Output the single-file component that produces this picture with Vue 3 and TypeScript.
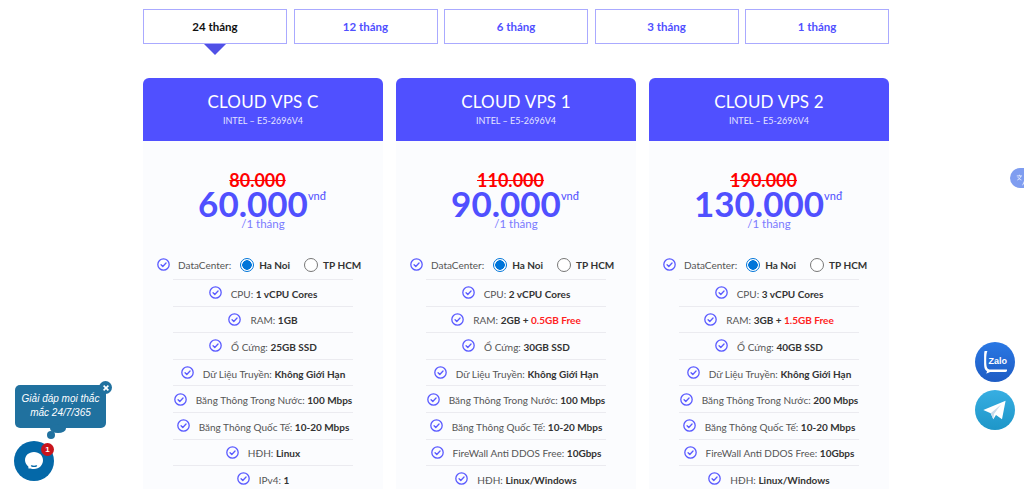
<template>
  <div class="page">
    <div class="wrap">
      <div class="tabs">
        <div v-for="(t, i) in tabs" :key="t" class="tab" :class="{ active: i === 0 }">{{ t }}</div>
      </div>
      <div class="cards">
        <div v-for="c in cards" :key="c.name" class="card">
          <div class="head">
            <div class="name">{{ c.name }}</div>
            <div class="cpu">INTEL – E5-2696V4</div>
          </div>
          <div class="body">
            <div class="old">{{ c.old }}</div>
            <div class="price">{{ c.price }}<sup>vnđ</sup></div>
            <div class="per">/1 tháng</div>
            <div class="dc">
              <svg class="chk" viewBox="0 0 24 24"><circle cx="12" cy="12" r="10.500" /><path d="M7.500 12.500l3.200 3.200 6-6.400" /></svg>
              <span class="lbl">DataCenter:</span>
              <span class="radio on"></span><b>Ha Noi</b>
              <span class="radio"></span><b>TP HCM</b>
            </div>
            <div class="rows">
              <div v-for="r in c.rows" :key="r.k" class="row">
                <svg class="chk" viewBox="0 0 24 24"><circle cx="12" cy="12" r="10.500" /><path d="M7.500 12.500l3.200 3.200 6-6.400" /></svg>
                <span class="txt">{{ r.k }}: <b>{{ r.v }}</b><b v-if="r.free"> + <em>{{ r.free }}</em></b></span>
              </div>
            </div>
          </div>
        </div>
      </div>
    </div>

    <div class="translate">
      <svg viewBox="0 0 24 24" width="14" height="14"><path d="M3 5h9M7.500 3v2M4 12c3-1 5-3 6-7M5 7c1 2 3 4 6 5M13 21l4-9 4 9M14.500 18h5" /></svg>
    </div>

    <div class="social zalo">
      <svg viewBox="0 0 40 40" width="40" height="40">
        <path class="zb" d="M9.600 9h2.800c-.8 2-1.200 4.500-1.200 9 0 3.500.2 6.200.8 7.500.6 1.400 1.600 2 3.600 2.100L32 27.500v1.300c0 .6-.6 1.200-1.500 1.200H17.500c-1.300 0-2.200-.1-3 .2-.9.4-2 1-3.500 1.300.6-.8 1-1.500 1-2.300-1.800-1-2.900-3-2.900-7V13c0-1.500.2-3 .5-4z" />
        <text x="22.800" y="21.500" text-anchor="middle">Zalo</text>
      </svg>
    </div>
    <div class="social tele">
      <svg viewBox="0 0 40 40" width="40" height="40">
        <path fill="#fff" d="M8.300 20 30.600 10.700 27 29.300 21 25l-2.700 4.300-2.600-6z" />
        <path fill="#c8daea" d="M15.700 23.300 26 14.500l-7 9.500-.7 5.300z" />
      </svg>
    </div>

    <div class="bubble">
      Giải đáp mọi thắc mắc 24/7/365
      <span class="close">
        <svg viewBox="0 0 10 10" width="8" height="8"><path d="M2 2l6 6M8 2l-6 6" /></svg>
      </span>
    </div>
    <span class="dot big"></span>
    <span class="dot small"></span>
    <div class="chat">
      <svg viewBox="0 0 40 40" width="40" height="40">
        <path fill="#fff" d="M20 11c5.300 0 9 3.600 9 8.200 0 4.700-3.700 8.800-9 8.800-1.200 0-2.400-.2-3.400-.6-.8.2-1.600.2-2.300-.2.200-.6.200-1.200 0-1.800-1.700-1.500-3.300-3.600-3.300-6.200 0-4.600 3.700-8.200 9-8.200z" />
        <path fill="none" stroke="#0468a8" stroke-width="1.300" stroke-linecap="round" d="M17.500 24.800c1.700.7 3.400.7 5 0" />
      </svg>
      <span class="badge">1</span>
    </div>
  </div>
</template>

<script setup lang="ts">
interface Row {
  k: string;
  v: string;
  free?: string;
}
interface Card {
  name: string;
  old: string;
  price: string;
  rows: Row[];
}

const tabs = ["24 tháng", "12 tháng", "6 tháng", "3 tháng", "1 tháng"];

const cards: Card[] = [
  {
    name: "CLOUD VPS C",
    old: "80.000",
    price: "60.000",
    rows: [
      { k: "CPU", v: "1 vCPU Cores" },
      { k: "RAM", v: "1GB" },
      { k: "Ổ Cứng", v: "25GB SSD" },
      { k: "Dữ Liệu Truyền", v: "Không Giới Hạn" },
      { k: "Băng Thông Trong Nước", v: "100 Mbps" },
      { k: "Băng Thông Quốc Tế", v: "10-20 Mbps" },
      { k: "HĐH", v: "Linux" },
      { k: "IPv4", v: "1" },
    ],
  },
  {
    name: "CLOUD VPS 1",
    old: "110.000",
    price: "90.000",
    rows: [
      { k: "CPU", v: "2 vCPU Cores" },
      { k: "RAM", v: "2GB", free: "0.5GB Free" },
      { k: "Ổ Cứng", v: "30GB SSD" },
      { k: "Dữ Liệu Truyền", v: "Không Giới Hạn" },
      { k: "Băng Thông Trong Nước", v: "100 Mbps" },
      { k: "Băng Thông Quốc Tế", v: "10-20 Mbps" },
      { k: "FireWall Anti DDOS Free", v: "10Gbps" },
      { k: "HĐH", v: "Linux/Windows" },
    ],
  },
  {
    name: "CLOUD VPS 2",
    old: "190.000",
    price: "130.000",
    rows: [
      { k: "CPU", v: "3 vCPU Cores" },
      { k: "RAM", v: "3GB", free: "1.5GB Free" },
      { k: "Ổ Cứng", v: "40GB SSD" },
      { k: "Dữ Liệu Truyền", v: "Không Giới Hạn" },
      { k: "Băng Thông Trong Nước", v: "200 Mbps" },
      { k: "Băng Thông Quốc Tế", v: "10-20 Mbps" },
      { k: "FireWall Anti DDOS Free", v: "10Gbps" },
      { k: "HĐH", v: "Linux/Windows" },
    ],
  },
];
</script>

<style>
html,
body {
  overflow: hidden;
  background: #fff;
}
</style>

<style scoped>
.page {
  position: relative;
  height: 489px;
  overflow: hidden;
  font-family: "Lato", "Liberation Sans", sans-serif;
  color: #555;
}
.wrap {
  width: 746px;
  margin-left: 143px;
  padding-top: 9px;
}
.tabs {
  display: flex;
  justify-content: space-between;
}
.tab {
  position: relative;
  width: 144px;
  height: 35px;
  box-sizing: border-box;
  border: 1px solid #aaaaff;
  display: flex;
  align-items: center;
  justify-content: center;
  font-size: 11.500px;
  font-weight: 700;
  color: #5050ff;
}
.tab.active {
  color: #111;
}
.tab.active::after {
  content: "";
  position: absolute;
  top: 34px;
  left: 60px;
  border: 11px solid transparent;
  border-top-color: #5050e6;
  border-bottom: 0;
}
.cards {
  display: flex;
  justify-content: space-between;
  margin-top: 34px;
}
.card {
  width: 240px;
}
.head {
  height: 63px;
  box-sizing: border-box;
  padding-top: 13px;
  background: #5050ff;
  border-radius: 6px 6px 0 0;
  color: #fff;
  text-align: center;
}
.name {
  font-size: 17px;
  line-height: 22px;
  letter-spacing: 0.2px;
}
.cpu {
  font-size: 9px;
  line-height: 14px;
  margin-top: 1px;
  color: #e4e4ff;
}
.body {
  height: 348px;
  background: #fbfcfe;
  padding-top: 29px;
  text-align: center;
}
.old {
  font-size: 18px;
  line-height: 20px;
  font-weight: 700;
  color: #f00;
  text-decoration: line-through;
  margin-right: 11px;
}
.price {
  font-size: 35px;
  line-height: 26px;
  font-weight: 700;
  color: #5050ff;
  margin-right: 2px;
}
.price sup {
  font-size: 11px;
  font-weight: 400;
  vertical-align: 17px;
  line-height: 0;
}
.per {
  font-size: 11.500px;
  line-height: 14px;
  margin-top: 1px;
  color: #7a7aff;
}
.dc {
  display: flex;
  align-items: center;
  margin: 23px 0 3px;
  height: 22px;
  padding-left: 14px;
  font-size: 10px;
}
.dc b {
  color: #333;
}
.dc .lbl {
  margin: 0 9px 0 8px;
}
.radio {
  width: 14px;
  height: 14px;
  box-sizing: border-box;
  border: 1px solid #777;
  border-radius: 50%;
  background: #fff;
  margin-right: 5px;
  margin-left: 14px;
}
.lbl + .radio {
  margin-left: 0;
}
.radio.on {
  border-color: #0075d9;
  background: radial-gradient(circle, #0075d9 0 4.500px, #fff 5px);
}
.rows {
  width: 180px;
  margin: 0 auto;
}
.row {
  height: 26.600px;
  box-sizing: border-box;
  padding-top: 2px;
  border-top: 1px solid #ebebf0;
  display: flex;
  align-items: center;
  justify-content: center;
  gap: 9px;
  font-size: 10px;
  white-space: nowrap;
}
.row b {
  color: #333;
}
.row em {
  font-style: normal;
  color: #f22;
}
.chk {
  width: 13px;
  height: 13px;
  flex: none;
  margin-top: -2px;
  fill: none;
  stroke: #5a5aff;
  stroke-width: 2.400;
  stroke-linecap: round;
  stroke-linejoin: round;
}
.translate {
  position: absolute;
  top: 168px;
  left: 1010px;
  width: 24px;
  height: 20px;
  border-radius: 10px;
  background: #7f9df0;
  padding: 3px 0 0 5px;
  box-sizing: border-box;
}
.translate svg {
  fill: none;
  stroke: #e8eeff;
  stroke-width: 1.500;
}
.social {
  position: absolute;
  left: 975px;
  width: 40px;
  height: 40px;
  border-radius: 50%;
}
.zalo {
  top: 342px;
  background: linear-gradient(#2a78e4, #1e5cc4);
}
.zb {
  fill: #fff;
}
.zalo text {
  font: 700 9px "Liberation Sans", sans-serif;
  fill: #fff;
}
.tele {
  top: 390px;
  background: linear-gradient(#37aee2, #1e96c8);
}
.bubble {
  position: absolute;
  left: 15px;
  top: 385px;
  width: 91px;
  height: 43px;
  box-sizing: border-box;
  padding: 7px 4px;
  border-radius: 5px;
  background: #20719f;
  color: #fff;
  font: italic 10px/13.500px "Liberation Sans", sans-serif;
  text-align: center;
}
.close {
  position: absolute;
  top: -4px;
  right: -6px;
  width: 13px;
  height: 13px;
  border-radius: 50%;
  background: #20719f;
  display: flex;
  align-items: center;
  justify-content: center;
}
.close svg {
  fill: none;
  stroke: #fff;
  stroke-width: 2;
}
.dot {
  position: absolute;
  border-radius: 50%;
  background: #20719f;
}
.dot.big {
  left: 50px;
  top: 424px;
  width: 16px;
  height: 9px;
}
.dot.small {
  left: 47px;
  top: 431px;
  width: 8px;
  height: 8px;
}
.chat {
  position: absolute;
  left: 14px;
  top: 441px;
  width: 40px;
  height: 40px;
  border-radius: 50%;
  background: #0468a8;
}
.badge {
  position: absolute;
  top: 2px;
  right: 0;
  width: 13px;
  height: 13px;
  border-radius: 50%;
  background: #c8141c;
  color: #fff;
  font: 700 8px/13px "Liberation Sans", sans-serif;
  text-align: center;
}
</style>
